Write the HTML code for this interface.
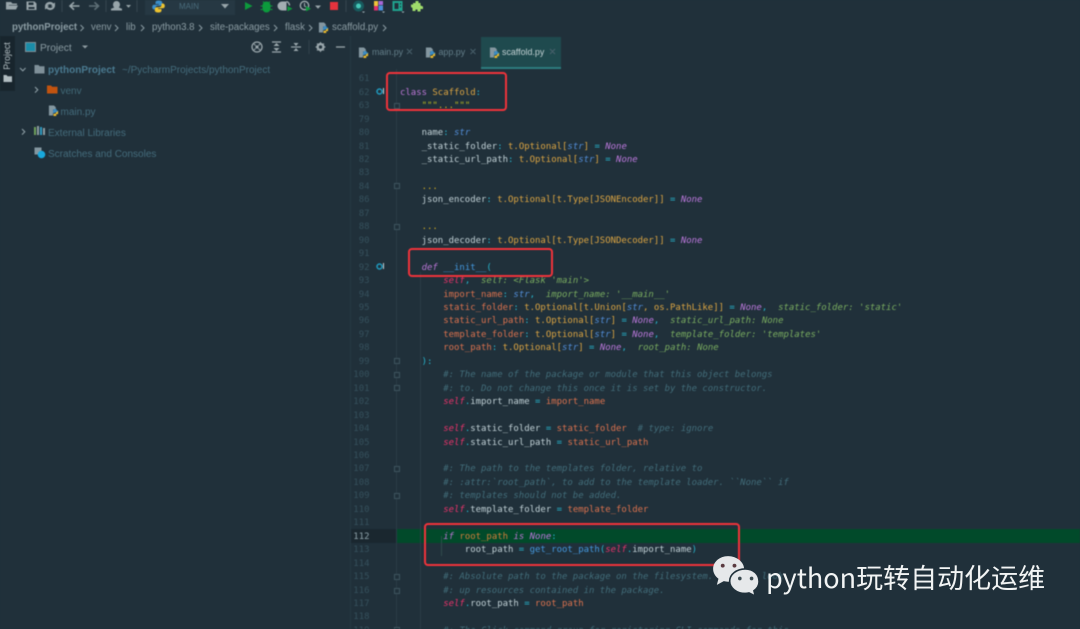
<!DOCTYPE html>
<html lang="en"><head><meta charset="utf-8"><title>scaffold.py</title>
<style>
html,body{margin:0;padding:0;width:1080px;height:629px;overflow:hidden;background:#20303a}
#ui{position:absolute;left:0;top:0;width:1080px;height:629px;overflow:hidden;filter:blur(.42px);background:#20303a;font-family:"Liberation Sans",sans-serif}
.a{position:absolute;white-space:nowrap}
.bc{top:22px;font-size:9.7px;line-height:12px;color:#8b9ca3}
.tr{font-size:10px;line-height:14px;color:#446c7c}
.tab{top:46px;font-size:8.9px;line-height:13px;color:#647f8a}
pre{margin:0;font-family:"DejaVu Sans Mono","Liberation Mono",monospace;font-size:8.98px;line-height:13.456px}
#nums{position:absolute;left:340px;top:73.3px;width:29.5px;text-align:right;color:#35505c}
#code{position:absolute;left:400px;top:73.3px;color:#c2d2d7}
.k{color:#bb76d6}.ki{color:#bb76d6;font-style:italic}.c{color:#dca542}.o{color:#27b6ce}.b{color:#528ed9;font-style:italic}.n{color:#be79df;font-style:italic}
.s{color:#e6336a;font-style:italic}.p{color:#dc724e}.h{color:#7aad60;font-style:italic}.m{color:#426d7a;font-style:italic}.d{color:#b4b622}.f{color:#4499e0}.e{color:#d8b023}
.fold{position:absolute;left:393.5px;width:4px;height:4px;border:1px solid #3e545e;background:#20303a}
.red{position:absolute;border:2.5px solid #f0333a;border-radius:4px;box-sizing:border-box}
svg{position:absolute;overflow:visible}
#wm{position:absolute;left:766px;top:557px;font-family:"Noto Sans CJK SC","Liberation Sans",sans-serif;font-size:27px;line-height:40px;color:#f2f4f4;white-space:nowrap;filter:blur(.25px)}
</style></head><body>
<svg width="0" height="0" style="position:absolute"><defs>
<symbol id="py" viewBox="0 0 12 12"><path d="M1 0.500h5.500l2 2v2.500H5.500v6.500H1z" fill="#8497a0"/><path d="M6.500 4.500h3V6h1.500v2H8l-1 .800H5.500V6z" fill="#3a8cc4"/><path d="M11 6.500v3.500H9V12H6v-2.500h2l1-1.500z" fill="#e9b92f"/></symbol>
<symbol id="logo" viewBox="0 0 13 13"><path d="M6.500 .500c-2 0-3 .700-3 2v1.500h3.300v.700H2.200C.900 4.700.200 5.700.200 7s.700 2.500 2 2.500h1.300V8c0-1.300 1-2.200 2.300-2.200h2.600c1 0 1.800-.800 1.800-1.800V2.500c0-1.300-1.500-2-3.700-2z" fill="#3b8ec9"/><path d="M6.500 12.500c2 0 3-.700 3-2V9H6.200v-.700h4.600c1.300 0 2-1 2-2.300s-.700-2.500-2-2.500H9.500V5c0 1.300-1 2.200-2.300 2.200H4.600c-1 0-1.800.800-1.800 1.800v1.500c0 1.300 1.500 2 3.700 2z" fill="#ecc22f"/></symbol>
</defs></svg>
<div id="ui">
<!-- toolbar -->
<div class="a" style="left:145px;top:0;width:90px;height:15px;background:#263843"></div>
<svg style="left:0;top:0" width="430" height="16">
<g fill="#98a5aa">
<path d="M6 2h5l1.500 1.500H17V5H9L7 9.500H6z"/><path d="M8.500 5.500H18l-2 4H6.800z"/>
<path d="M26.500 1.500h8l2 2v6.500h-10zM28.500 2.500v2.500h5V2.500zM28.500 7v2h6V7z" fill-rule="evenodd"/>
<path d="M45 5.500a5 5 0 0 1 8.500-2l1.500-1v4h-4l1.200-1.200a3.200 3.200 0 0 0-5.200.8zM55 6a5 5 0 0 1-8.500 2.500L45 9.500v-4h4l-1.300 1.400a3.200 3.200 0 0 0 5.400-1.200z"/>
<path d="M113 4.500a3.500 3.500 0 1 1 7 0c0 1.500-.7 2.500-1.200 3l3.200 1.300V10.500h-11V8.800l3.200-1.300c-.5-.5-1.200-1.500-1.200-3z"/>
<path d="M126 5h5l-2.500 2.800z"/>
<path d="M221 4h8l-4 4.500z"/>
<path d="M315 5.500h6l-3 3.300z"/>
</g>
<path d="M79.500 6H70M74 2.300L70 6l4 3.700" fill="none" stroke="#98a5aa" stroke-width="1.600"/>
<path d="M89 6h9.500M94.500 2.300L98.500 6l-4 3.700" fill="none" stroke="#5e6f77" stroke-width="1.600"/>
<g stroke="#34464f"><path d="M62 0v12M106 0v12M137 0v12M346 0v12"/></g>
<use href="#logo" x="152" y="0" width="13" height="13"/>
<path d="M245 2l7.500 4-7.500 4z" fill="#0d9a3c"/>
<path d="M262.500 5.500a4 4 0 0 1 8 0v3a4 4 0 0 1-8 0z" fill="#0c9a3c"/><path d="M263 1.500l2 2M270 1.500l-2 2M260.500 6h2M270.500 6h2M260.500 9.500h2M270.500 9.500h2" stroke="#0c9a3c"/>
<path d="M282 1.500h4.500v9H282a4.500 4.500 0 0 1 0-9z" fill="#a3aeb2"/><path d="M286.500 1.500a4.500 4.500 0 0 1 3 4" fill="none" stroke="#a3aeb2" stroke-width="1.400"/><path d="M287.500 6l5 2.700-5 2.700z" fill="#0d9a3c"/>
<circle cx="304.500" cy="5.500" r="4.200" fill="none" stroke="#a3aeb2" stroke-width="1.300"/><path d="M304.500 3v3l1.500 1" stroke="#a3aeb2" fill="none"/><path d="M306 6l5 2.700-5 2.700z" fill="#0d9a3c"/>
<rect x="330" y="2" width="8" height="8" fill="#e5333d"/>
<circle cx="358.500" cy="6" r="5.500" fill="#185a5e"/><circle cx="358.500" cy="6" r="2.500" fill="#46c8b8"/>
<rect x="374" y="1" width="4" height="5" fill="#f0c53a"/><rect x="374" y="6" width="4" height="4.500" fill="#e0306e"/><rect x="378.500" y="1" width="4.500" height="4" fill="#a667d8"/><rect x="378.500" y="5.500" width="4.500" height="5" fill="#4b90d8"/>
<path d="M392.500 1h10v10h-10zM394.500 3v6h4V3zM400 3v1.500h1V3zM400 6v1.500h1V6z" fill="#1fa38e" fill-rule="evenodd"/>
<path d="M413 3h2.500V1h3v2h2v2.500l2.500 1v2.500h-2.500v2.500h-3v-2h-2v1.500h-3v-3l-1.500-1v-2.500h2z" fill="#9fdc6b"/>
<g fill="#9fb0b6"><path d="M362 11.500h3l-1.500 1.500zM382 11.500h3l-1.500 1.500zM401.500 11.500h3L403 13z"/></g>
</svg>
<div class="a" style="left:179px;top:1px;font-size:8px;line-height:11px;color:#4a6c7c">MAIN</div>
<!-- breadcrumbs -->
<div class="a bc" style="left:12px;font-weight:bold">pythonProject</div>
<div class="a bc" style="left:91px">venv</div>
<div class="a bc" style="left:126px">lib</div>
<div class="a bc" style="left:152px">python3.8</div>
<div class="a bc" style="left:210px">site-packages</div>
<div class="a bc" style="left:285px">flask</div>
<div class="a bc" style="left:332px">scaffold.py</div>
<svg style="left:0;top:21px" width="400" height="14"><g fill="none" stroke="#8b9ca3" stroke-width="1"><path d="M80.500 4l3 3-3 3M115 4l3 3-3 3M141 4l3 3-3 3M199 4l3 3-3 3M274 4l3 3-3 3M309 4l3 3-3 3M383 4l3 3-3 3"/></g><use href="#py" x="318" y="1" width="11" height="11"/></svg>
<!-- left strip -->
<div class="a" style="left:0;top:36px;width:15px;height:55px;background:#18252d"></div>
<div class="a" style="left:-11px;top:50px;width:36px;height:12px;font-size:8.8px;line-height:12px;color:#b6c2c6;text-align:center;transform:rotate(-90deg)">Project</div>
<svg style="left:0;top:0" width="20" height="90"><path d="M3.500 75h3l1 1.200h4.500V82H3.500z" fill="#b0bcc0"/></svg>
<!-- panel header -->
<svg style="left:0;top:36px" width="350" height="24">
<rect x="25.500" y="6.500" width="10" height="9" fill="#1a8ca8" stroke="#7f9099"/>
<path d="M82 9.500h6l-3 3z" fill="#8e9ca2"/>
<circle cx="257" cy="11" r="5" fill="none" stroke="#9aa7ac" stroke-width="1.300"/><circle cx="257" cy="11" r="1.600" fill="#9aa7ac"/><path d="M254 8l1.500 1.500M260 8l-1.500 1.500M254 14l1.500-1.500M260 14l-1.500-1.500" stroke="#9aa7ac"/>
<path d="M272 6h9M272 16h9" stroke="#9aa7ac" stroke-width="1.200"/><path d="M276.500 7l-3 3h6zM276.500 15l-3-3h6z" fill="#9aa7ac"/>
<path d="M291 11h10" stroke="#9aa7ac" stroke-width="1.200"/><path d="M296 10l-2.500-3h5zM296 12l-2.500 3h5z" fill="#9aa7ac"/>
<path d="M309 4v14" stroke="#31434d"/>
<circle cx="320.500" cy="11" r="3" fill="none" stroke="#9aa7ac" stroke-width="2.200"/><path d="M320.500 6v10M315.500 11h10M317 7.500l7 7M324 7.500l-7 7" stroke="#9aa7ac" stroke-width="1"/><circle cx="320.500" cy="11" r="1.600" fill="#20303a"/>
<path d="M336 11h9" stroke="#9aa7ac" stroke-width="1.300"/>
</svg>
<div class="a" style="left:40px;top:41.500px;font-size:10.2px;line-height:13px;color:#8a9ba2">Project</div>
<!-- tree -->
<svg style="left:0;top:60px" width="60" height="105">
<path d="M20 8l2.800 2.800L25.600 8" fill="none" stroke="#8b9ca3" stroke-width="1.100"/>
<path d="M34.500 5h4l1.200 1.200h4.800V13.500h-10z" fill="#7f9099"/>
<path d="M35 27l2.800 2.800L35 32.600" fill="none" stroke="#8b9ca3" stroke-width="1.100"/>
<path d="M47 25.500h4l1.200 1.300H57.500V33.500H47z" fill="#c2530f"/>
<use href="#py" x="48" y="45" width="11" height="11"/>
<path d="M22 69l2.800 2.800L22 74.600" fill="none" stroke="#8b9ca3" stroke-width="1.100"/>
<rect x="34" y="67" width="2" height="8" fill="#6fa05c"/><rect x="37" y="66" width="2" height="9" fill="#8e9ca2"/><rect x="40" y="67" width="2" height="8" fill="#2e9ac0"/><rect x="43" y="68" width="2" height="7" fill="#8e9ca2"/>
<rect x="34.500" y="87.500" width="7" height="7" fill="#8497a0"/><circle cx="41.500" cy="94.500" r="3.800" fill="#18a8dc"/>
</svg>
<div class="a tr" style="left:48px;top:63.500px;font-weight:bold;color:#4a7a90">pythonProject</div>
<div class="a tr" style="left:122px;top:63.500px">~/PycharmProjects/pythonProject</div>
<div class="a tr" style="left:60.500px;top:84.500px;color:#426a78">venv</div>
<div class="a tr" style="left:60.500px;top:105.500px">main.py</div>
<div class="a tr" style="left:48px;top:126.500px">External Libraries</div>
<div class="a tr" style="left:48px;top:147.500px">Scratches and Consoles</div>
<!-- editor frame -->
<div class="a" style="left:350px;top:36px;width:1px;height:593px;background:#263843"></div>
<div class="a" style="left:481px;top:37px;width:80px;height:32px;background:#1f4a4e"></div>
<div class="a" style="left:481px;top:67px;width:80px;height:2px;background:#2c7c7e"></div>
<svg style="left:355px;top:46px" width="210" height="14">
<use href="#py" x="3" y="1" width="11" height="11"/><use href="#py" x="70" y="1" width="11" height="11"/><use href="#py" x="134" y="1" width="11" height="11"/>
<path d="M52 3l5 5M57 3l-5 5M115.500 3l5 5M120.500 3l-5 5M195 3l5 5M200 3l-5 5" stroke="#4a626d" fill="none"/>
</svg>
<div class="a tab" style="left:372px">main.py</div>
<div class="a tab" style="left:438.500px">app.py</div>
<div class="a tab" style="left:502px;color:#c3d2d4">scaffold.py</div>
<!-- gutter -->
<div class="a" style="left:396px;top:69px;width:1px;height:560px;background:#2a3c46"></div>
<div class="a" style="left:351px;top:529px;width:45px;height:13.500px;background:#1a272f"></div>
<div class="a" style="left:397px;top:529px;width:683px;height:13.500px;background:#014a2a"></div>
<div class="a" style="left:420px;top:272px;width:1px;height:357px;background:#2a3c46"></div>
<div class="a" style="left:441px;top:536px;width:1px;height:20px;background:#2f4a4c"></div>
<div class="fold" style="top:102.500px"></div>
<div class="fold" style="top:183px"></div><div class="fold" style="top:223.500px"></div>
<div class="fold" style="top:358px"></div><div class="fold" style="top:371.500px"></div><div class="fold" style="top:385px"></div>
<div class="fold" style="top:466px"></div><div class="fold" style="top:493px"></div>
<div class="fold" style="top:574px"></div><div class="fold" style="top:587.500px"></div><div class="fold" style="top:627px"></div>
<svg style="left:376px;top:85px" width="14" height="190">
<circle cx="3.500" cy="6.500" r="2.500" fill="none" stroke="#1f9bc0" stroke-width="1.500"/><path d="M7.500 3v6" stroke="#c4d0d4"/>
<circle cx="3.500" cy="181.500" r="2.500" fill="none" stroke="#1f9bc0" stroke-width="1.500"/><path d="M7.500 178v6" stroke="#c4d0d4"/>
</svg>
<pre id="nums">61
62
63
79
80
81
82
83
84
86
87
88
90
91
92
93
94
95
96
97
98
99
100
101
102
103
104
105
106
107
108
109
110
111
<span style="color:#8fa3ab">112</span>
113
114
115
116
117
118
119</pre>
<pre id="code">

<span class="k">class</span> <span class="c">Scaffold</span><span class="o">:</span>
    <span class="d">"""</span><span class="e" style="text-decoration:underline">...</span><span class="d">"""</span>

    name<span class="o">:</span> <span class="b">str</span>
    _static_folder<span class="o">:</span> <span class="c">t.Optional[</span><span class="b">str</span><span class="c">]</span> <span class="o">=</span> <span class="n">None</span>
    _static_url_path<span class="o">:</span> <span class="c">t.Optional[</span><span class="b">str</span><span class="c">]</span> <span class="o">=</span> <span class="n">None</span>

    <span class="e">...</span>
    json_encoder<span class="o">:</span> <span class="c">t.Optional[t.Type[JSONEncoder]]</span> <span class="o">=</span> <span class="n">None</span>

    <span class="e">...</span>
    json_decoder<span class="o">:</span> <span class="c">t.Optional[t.Type[JSONDecoder]]</span> <span class="o">=</span> <span class="n">None</span>

    <span class="ki">def</span> <span class="f">__init__</span><span class="o">(</span>
        <span class="s">self</span><span class="o">,</span>  <span class="h">self: &lt;Flask 'main'&gt;</span>
        <span class="p">import_name</span><span class="o">:</span> <span class="b">str</span><span class="o">,</span>  <span class="h">import_name: '__main__'</span>
        <span class="p">static_folder</span><span class="o">:</span> <span class="c">t.Optional[t.Union[</span><span class="b">str</span><span class="c">, os.PathLike]]</span> <span class="o">=</span> <span class="n">None</span><span class="o">,</span>  <span class="h">static_folder: 'static'</span>
        <span class="p">static_url_path</span><span class="o">:</span> <span class="c">t.Optional[</span><span class="b">str</span><span class="c">]</span> <span class="o">=</span> <span class="n">None</span><span class="o">,</span>  <span class="h">static_url_path: None</span>
        <span class="p">template_folder</span><span class="o">:</span> <span class="c">t.Optional[</span><span class="b">str</span><span class="c">]</span> <span class="o">=</span> <span class="n">None</span><span class="o">,</span>  <span class="h">template_folder: 'templates'</span>
        <span class="p">root_path</span><span class="o">:</span> <span class="c">t.Optional[</span><span class="b">str</span><span class="c">]</span> <span class="o">=</span> <span class="n">None</span><span class="o">,</span>  <span class="h">root_path: None</span>
    <span class="o">):</span>
        <span class="m">#: The name of the package or module that this object belongs</span>
        <span class="m">#: to. Do not change this once it is set by the constructor.</span>
        <span class="s">self</span><span class="o">.</span>import_name <span class="o">=</span> <span class="p">import_name</span>

        <span class="s">self</span><span class="o">.</span>static_folder <span class="o">=</span> <span class="p">static_folder</span>  <span class="m"># type: ignore</span>
        <span class="s">self</span><span class="o">.</span>static_url_path <span class="o">=</span> <span class="p">static_url_path</span>

        <span class="m">#: The path to the templates folder, relative to</span>
        <span class="m">#: :attr:`root_path`, to add to the template loader. ``None`` if</span>
        <span class="m">#: templates should not be added.</span>
        <span class="s">self</span><span class="o">.</span>template_folder <span class="o">=</span> <span class="p">template_folder</span>

        <span class="ki">if</span> <span class="p" style="color:#d07f3a">root_path</span> <span class="ki">is</span> <span class="n">None</span><span class="o">:</span>
            root_path <span class="o">=</span> <span class="f">get_root_path</span><span class="o">(</span><span class="s">self</span><span class="o">.</span>import_name<span class="o">)</span>

        <span class="m">#: Absolute path to the package on the filesystem. Used to look</span>
        <span class="m">#: up resources contained in the package.</span>
        <span class="s">self</span><span class="o">.</span>root_path <span class="o">=</span> <span class="p">root_path</span>

        <span class="m">#: The Click command group for registering CLI commands for this</span></pre>
<!-- highlight boxes -->
<div class="red" style="left:386px;top:72px;width:121px;height:39px"></div>
<div class="red" style="left:408px;top:248px;width:145px;height:29px"></div>
<div class="red" style="left:424px;top:523px;width:316px;height:43px"></div>
</div>
<!-- watermark -->
<svg style="left:712px;top:555px" width="53.500" height="47" viewBox="0 0 50 44">
<path d="M15 1C7 1 1 6.500 1 13c0 3.700 2 7 5 9.200L4.500 28l6.500-3.500c1.300.3 2.700.5 4 .5 8 0 15-5.500 15-12S23 1 15 1z" fill="#e6e8ea"/>
<path d="M31 13c-8 0-14.500 5.200-14.500 11.500S23 36 31 36c1.300 0 2.500-.2 3.700-.5l5.800 3-1.300-5c2.800-2.100 4.800-5.200 4.800-8.500C44 18.200 39 13 31 13z" fill="#e6e8ea" stroke="#20303a" stroke-width="1.500"/>
<circle cx="10" cy="10" r="1.800" fill="#5a3a40"/><circle cx="21" cy="10" r="1.800" fill="#5a3a40"/>
<circle cx="26" cy="22" r="1.700" fill="#3c4a50"/><circle cx="37" cy="22" r="1.700" fill="#3c4a50"/>
</svg>
<div id="wm">python玩转自动化运维</div>
</body></html>
